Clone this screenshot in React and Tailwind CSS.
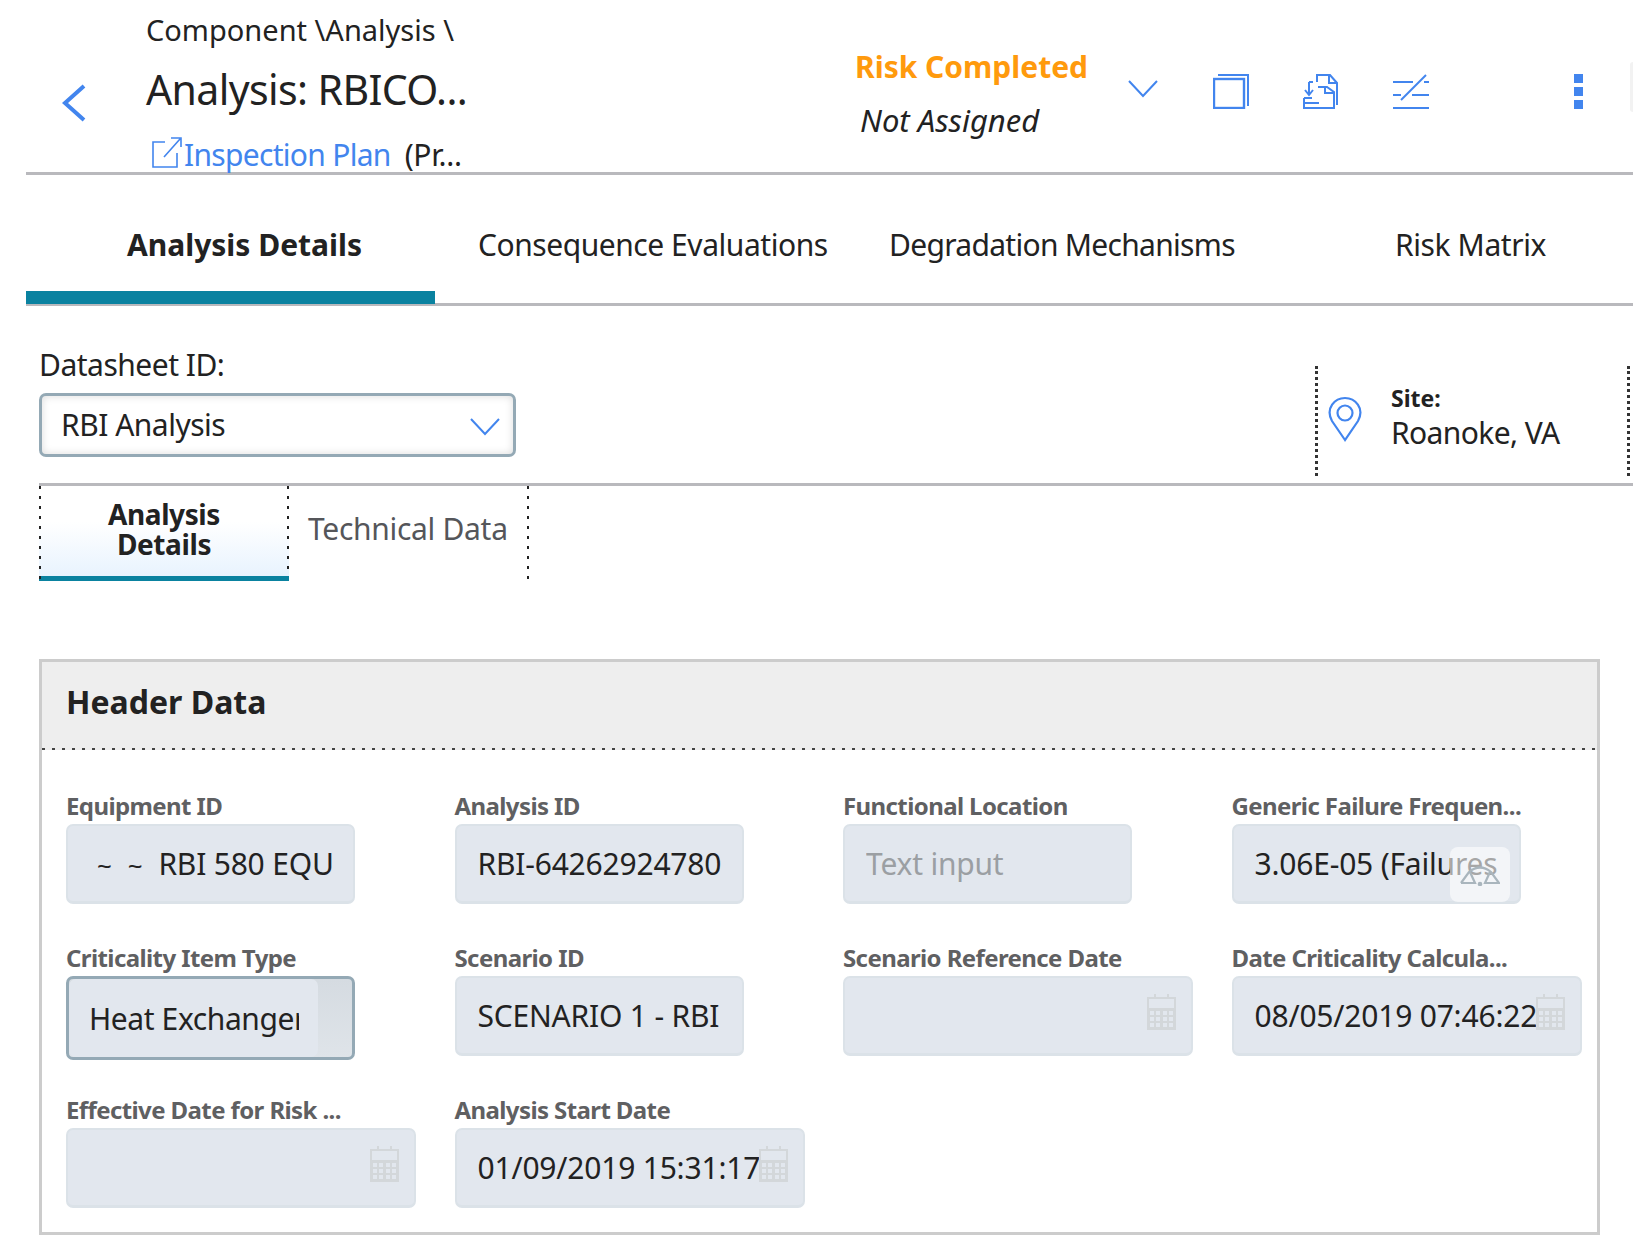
import React from 'react';

const blue = '#4285ee';
const dotsDown = 'bg-[repeating-linear-gradient(180deg,#222_0_3px,transparent_3px_10px)]';

const Chevron = ({ className }) => (
  <svg className={className} viewBox="0 0 30 18" fill="none" stroke={blue} strokeWidth="2">
    <path d="M1 1l14 15L29 1" />
  </svg>
);

const CopyIcon = () => (
  <svg width="36" height="35" viewBox="0 0 36 35" fill="none" stroke={blue} strokeWidth="2">
    <rect x="1" y="5" width="30" height="29" strokeWidth="2.4" />
    <path d="M5 1h30v31" />
  </svg>
);

const FileIcon = () => (
  <svg width="36" height="35" viewBox="0 0 36 35" fill="none" stroke={blue} strokeWidth="2">
    <path d="M14 8V1h13l7 8v22" />
    <path d="M26 1v8h8" />
    <path d="M6 8v12M2 16l4 5 4-5" />
    <path d="M6 8h4" />
    <path d="M1 24v10h30V18l-7-5H15" />
    <path d="M22 13v6h9" />
    <path d="M1 24h8M1 29h15" />
  </svg>
);

const NotEqualLines = () => (
  <svg width="36" height="35" viewBox="0 0 36 35" fill="none" stroke={blue} strokeWidth="2">
    <path d="M0 8h20M31 8h5M0 21h8M19 21h17M0 34h36" />
    <path d="M8 26L33 1" />
  </svg>
);

const CalendarIcon = () => (
  <svg width="29" height="36" viewBox="0 0 29 36" fill="#d3d7da">
    <path d="M0 3h7V0h2v3h11V0h2v3h7v33H0z" />
    <g fill="#e2e7ee">
      <rect x="2" y="5" width="25" height="9" />
      <rect x="3" y="17" width="4" height="4" /><rect x="9" y="17" width="4" height="4" /><rect x="16" y="17" width="4" height="4" /><rect x="22" y="17" width="4" height="4" />
      <rect x="3" y="23" width="4" height="4" /><rect x="9" y="23" width="4" height="4" /><rect x="16" y="23" width="4" height="4" /><rect x="22" y="23" width="4" height="4" />
      <rect x="3" y="29" width="4" height="4" /><rect x="9" y="29" width="4" height="4" /><rect x="16" y="29" width="4" height="4" /><rect x="22" y="29" width="4" height="4" />
    </g>
  </svg>
);

const GaugeIcon = () => (
  <svg width="40" height="21" viewBox="0 0 40 21" fill="none" stroke="#a9b5bd" strokeWidth="2.2">
    <path d="M1 18L9 7Q20-2 31 7l8 11H25l5-11M1 18h14L10 7" />
    <circle cx="20" cy="19" r="1.2" fill="#a9b5bd" />
  </svg>
);

const FieldLabel = ({ children }) => (
  <div className="h-[20px] flex items-center text-[24px] font-bold text-[#5f6062] whitespace-nowrap tracking-[-0.6px]">{children}</div>
);

function Field({ label, value, placeholder, wide, calendar }) {
  return (
    <div className={wide ? 'w-[350px]' : 'w-[289px]'}>
      <FieldLabel>{label}</FieldLabel>
      <div className="relative mt-[8px] h-[80px] rounded-[7px] bg-[#e2e7ee] border-2 border-[#dbe2e8] border-b-[3px] flex items-center pl-[21px] pr-[19px] overflow-hidden">
        <div className={`overflow-hidden whitespace-nowrap text-[30px] tracking-[-0.2px] ${placeholder ? 'text-[#9b9fa3]' : 'text-[#222]'}`}>{value || placeholder}</div>
        {calendar && <div className="absolute right-[15px] top-[16px]"><CalendarIcon /></div>}
      </div>
    </div>
  );
}

export default function App() {
  return (
    <div className="relative w-[1633px] h-[1246px] overflow-hidden bg-white text-[#222] font-['Noto_Sans',sans-serif]">
      <div className="absolute left-[1630px] top-[62px] w-[3px] h-[50px] rounded-l-full bg-[#f2f2f2]" />

      {/* top bar */}
      <div className="ml-[26px] h-[175px] border-b-[3px] border-[#b9b9bd] flex">
        <div className="w-[120px] pl-[36px] pt-[84px]">
          <svg width="24" height="38" viewBox="0 0 24 38" fill="none" stroke={blue} strokeWidth="4"><path d="M22 2L3 19l19 17" /></svg>
        </div>
        <div className="w-[709px]">
          <div className="mt-[10px] text-[29px] leading-[40px]">Component \Analysis \</div>
          <div className="mt-[11px] text-[41px] leading-[56px] tracking-[-0.6px]">Analysis: RBICO...</div>
          <div className="mt-[18px] ml-[6px] flex items-center text-[30px] leading-[40px] tracking-[-0.7px]">
            <svg className="mb-[6px]" width="30" height="31" viewBox="0 0 30 31" fill="none" stroke={blue} strokeWidth="1.6"><path d="M13 5H1v25h24V16M12 20L28 2M19 1h10v9" /></svg>
            <span className="ml-[2px] text-[#4285ee]">Inspection Plan</span>
            <span className="ml-[14px] tracking-[-0.3px]">(Pr...</span>
          </div>
        </div>
        <div className="w-[273px]">
          <div className="mt-[46px] text-[30px] leading-[42px] font-bold text-[#ff9a0d]">Risk Completed</div>
          <div className="mt-[12px] ml-[5px] text-[31px] leading-[40px] italic">Not Assigned</div>
        </div>
        <div className="w-[85px] pt-[80px]"><Chevron className="w-[30px] h-[18px]" /></div>
        <div className="pt-[74px] flex gap-[54px]">
          <CopyIcon />
          <FileIcon />
          <NotEqualLines />
        </div>
        <div className="pt-[74px] ml-[145px] flex flex-col gap-[4px]">
          <div className="w-[9px] h-[9px] bg-[#4285ee]" />
          <div className="w-[9px] h-[9px] bg-[#4285ee]" />
          <div className="w-[9px] h-[9px] bg-[#4285ee]" />
        </div>
      </div>

      {/* main tabs */}
      <div className="ml-[26px] h-[131px] border-b-[3px] border-[#b9b9bd] flex text-[30px] leading-[40px] whitespace-nowrap">
        <div className="w-[409px] h-[129px] border-b-[13px] border-[#0a82a0] pl-[101px] pt-[50px] font-bold">Analysis Details</div>
        <div className="pt-[50px] pl-[43px] w-[454px] tracking-[-0.45px]">Consequence Evaluations</div>
        <div className="pt-[50px] w-[506px] tracking-[-0.7px]">Degradation Mechanisms</div>
        <div className="pt-[50px] tracking-[-0.4px]">Risk Matrix</div>
      </div>

      {/* datasheet row */}
      <div className="ml-[39px] h-[180px] border-b-[3px] border-[#b9b9bd] flex">
        <div className="w-[1276px]">
          <div className="mt-[39px] text-[30px] leading-[40px] tracking-[-0.5px]">Datasheet ID:</div>
          <div className="mt-[8px] w-[477px] h-[64px] rounded-[7px] border-[3px] border-[#94a9b5] shadow-[inset_0_0_8px_rgba(0,0,0,0.14)] flex items-center justify-between pl-[19px] pr-[13px]">
            <span className="text-[30px] leading-[40px] tracking-[-0.5px]">RBI Analysis</span>
            <Chevron className="w-[30px] h-[18px] mt-[4px]" />
          </div>
        </div>
        <div className="mt-[60px] w-[315px] h-[110px] border-x-[3px] border-dotted border-[#333] flex">
          <div className="pl-[10px] pt-[30px]">
            <svg width="34" height="46" viewBox="0 0 34 46" fill="none" stroke={blue} strokeWidth="2.2">
              <path d="M17 44L4 25C-3 12 7 2 17 2s20 10 13 23z" />
              <circle cx="17" cy="17" r="7.5" />
            </svg>
          </div>
          <div className="pl-[29px] pt-[19px]">
            <div className="text-[23px] leading-[26px] font-bold">Site:</div>
            <div className="mt-[2px] text-[30px] leading-[40px] tracking-[-0.6px]">Roanoke, VA</div>
          </div>
        </div>
      </div>

      {/* sub tabs */}
      <div className="ml-[39px] h-[173px] flex items-start">
        <div className="relative w-[250px] h-[100px]">
          <div className="h-[90px] bg-gradient-to-b from-white from-40% to-[#e8f3fe] flex justify-center pt-[13px] text-center text-[28px] leading-[30px] font-bold tracking-[-0.4px]">
            <div>Analysis<br />Details</div>
          </div>
          <div className="h-[5px] bg-[#0a82a0]" />
          <div className={`absolute left-0 top-0 bottom-0 w-[2px] ${dotsDown}`} />
          <div className={`absolute right-0 top-0 h-[90px] w-[2px] ${dotsDown}`} />
        </div>
        <div className="w-[240px] h-[93px] flex justify-between">
          <div className="pl-[19px] pt-[23px] text-[30px] leading-[40px] text-[#55565a] whitespace-nowrap tracking-[-0.3px]">Technical Data</div>
          <div className={`w-[2px] h-[93px] ${dotsDown}`} />
        </div>
      </div>

      {/* header data card */}
      <div className="ml-[39px] w-[1561px] h-[576px] border-[3px] border-[#cccccc]">
        <div className="h-[88px] bg-[#eeeeee] pl-[24px] pb-[9px] flex items-center text-[32px] font-bold">Header Data</div>
        <div className="h-[2px] -mt-[2px] bg-[repeating-linear-gradient(90deg,#444_0_3px,transparent_3px_10px)]" />
        <div className="pl-[24px] pt-[46px] grid grid-cols-[repeat(4,388.5px)] gap-y-[44px]">
          <Field
            label="Equipment ID"
            value={
              <span className="inline-block w-[247px] overflow-hidden align-bottom">
                <span className="ml-[8px] mr-[16px] text-[26px]">~</span>
                <span className="mr-[16px] text-[26px]">~</span>RBI 580 EQUIPMENT
              </span>
            }
          />
          <Field label="Analysis ID" value="RBI-64262924780" />
          <Field label="Functional Location" placeholder="Text input" />
          <div className="relative">
            <Field label="Generic Failure Frequen..." value="3.06E-05 (Failures" />
            <div className="absolute left-[218px] top-[51px] w-[60px] h-[55px] rounded-[8px] bg-white/60 flex items-end justify-center pb-[16px]"><GaugeIcon /></div>
          </div>
          <div className="w-[289px] h-[108px]">
            <FieldLabel>Criticality Item Type</FieldLabel>
            <div className="mt-[8px] h-[84px] rounded-[7px] border-[3px] border-[#94a9b5] bg-gradient-to-b from-[#d5dbe1] to-[#dfe4e9] flex overflow-hidden">
              <div className="w-[249px] rounded-[7px] bg-[#e2e7ee] pl-[20px] flex items-center text-[30px] tracking-[-0.4px] whitespace-nowrap overflow-hidden">
                <span className="w-[210px] overflow-hidden">Heat Exchanger</span>
              </div>
            </div>
          </div>
          <Field label="Scenario ID" value="SCENARIO 1 - RBI" />
          <Field label="Scenario Reference Date" wide calendar />
          <Field label="Date Criticality Calcula..." value="08/05/2019 07:46:22" wide calendar />
          <Field label="Effective Date for Risk ..." wide calendar />
          <Field label="Analysis Start Date" value="01/09/2019 15:31:17" wide calendar />
        </div>
      </div>
    </div>
  );
}
